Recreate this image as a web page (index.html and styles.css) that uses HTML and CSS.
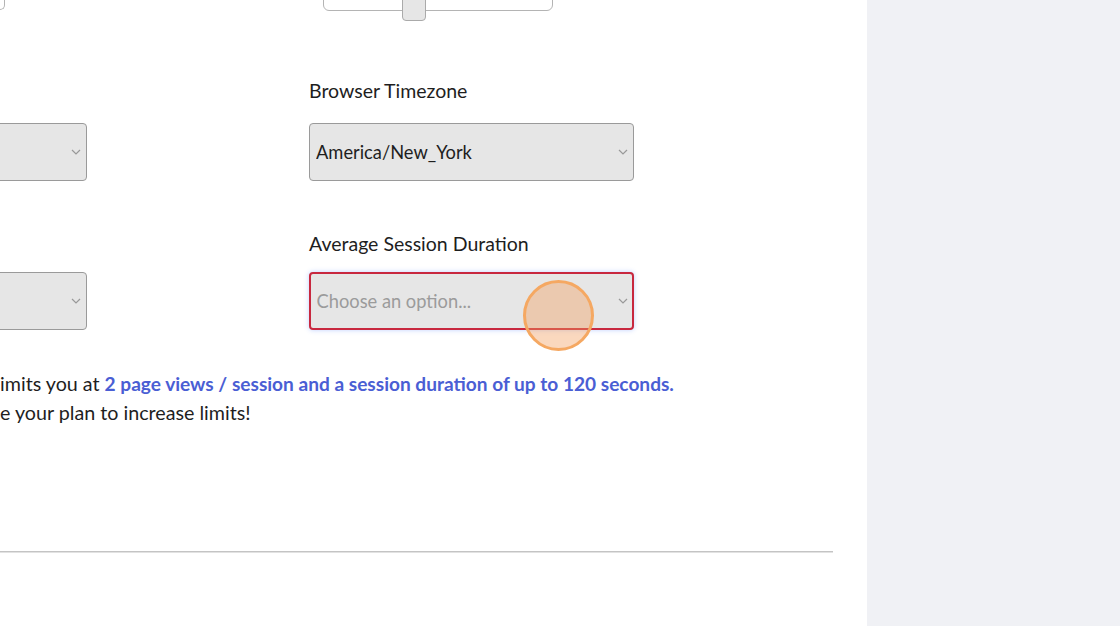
FILE: index.html
```html
<!DOCTYPE html>
<html lang="en">
<head>
    <meta charset="UTF-8">
    <title>Site Settings</title>
    <link rel="stylesheet" href="styles.css">
</head>
<body>

<div class="main">
    <div class="form">
        <div class="top-row">
            <div class="col">
                <div class="box"></div>
            </div>
            <div class="col">
                <div class="slider">
                    <div class="thumb"></div>
                </div>
            </div>
        </div>

        <div class="field-row">
            <div class="col">
                <label class="field-label">&nbsp;</label>
                <div class="select-wrap">
                    <select class="select" aria-label="Browser Language"><option></option></select>
                    <svg class="chevron" width="10" height="6" viewBox="0 0 10 6"><polyline points="1,1 5,5 9,1" fill="none" stroke="#999" stroke-width="1.2"/></svg>
                </div>
            </div>
            <div class="col">
                <label class="field-label">Browser Timezone</label>
                <div class="select-wrap">
                    <select class="select"><option>America/New_York</option></select>
                    <svg class="chevron" width="10" height="6" viewBox="0 0 10 6"><polyline points="1,1 5,5 9,1" fill="none" stroke="#999" stroke-width="1.2"/></svg>
                </div>
            </div>
        </div>

        <div class="field-row second">
            <div class="col">
                <label class="field-label">&nbsp;</label>
                <div class="select-wrap">
                    <select class="select" aria-label="Page Views per Session"><option></option></select>
                    <svg class="chevron" width="10" height="6" viewBox="0 0 10 6"><polyline points="1,1 5,5 9,1" fill="none" stroke="#999" stroke-width="1.2"/></svg>
                </div>
            </div>
            <div class="col">
                <label class="field-label">Average Session Duration</label>
                <div class="select-wrap">
                    <select class="select select-focus"><option>Choose an option...</option></select>
                    <svg class="chevron" width="10" height="6" viewBox="0 0 10 6"><polyline points="1,1 5,5 9,1" fill="none" stroke="#999" stroke-width="1.2"/></svg>
                    <div class="click-dot"></div>
                </div>
            </div>
        </div>
    </div>

    <div class="note">
        <p>imits you at <strong>2 page views / session and a session duration of up to 120 seconds.</strong></p>
        <p>e your plan to increase limits!</p>
    </div>

    <hr class="divider">
</div>

<div class="side"></div>

</body>
</html>
```

FILE: styles.css
```css
body {
    margin: 0;
    display: flex;
    height: 626px;
    overflow: hidden;
    font-family: Lato, "Noto Sans", sans-serif;
    color: #1e1e1e;
}
.main {
    width: 867px;
    background: white;
    overflow: hidden;
}
.side {
    flex: 1;
    background: #f0f1f5;
}
.form {
    margin-left: -238px;
    width: 1094px;
}
.top-row {
    display: grid;
    grid-template-columns: 547px 547px;
    margin-top: -30px;
    height: 41px;
}
.box {
    width: 243px;
    height: 40px;
    border: 1px solid #b4b4b4;
    border-top: none;
    border-radius: 0 0 5px 5px;
    box-sizing: border-box;
}
.slider {
    position: relative;
    margin-left: 14px;
    width: 230px;
    height: 41px;
    border: 1.5px solid #b4b4b4;
    border-radius: 0 0 6px 6px;
    box-sizing: border-box;
}
.thumb {
    position: absolute;
    left: 78px;
    bottom: -11px;
    width: 24px;
    height: 32px;
    background: #e6e6e6;
    border: 1.5px solid #aaa;
    border-radius: 4px;
    box-sizing: border-box;
}
.field-row {
    display: grid;
    grid-template-columns: 547px 547px;
    margin-top: 68px;
}
.field-row.second {
    margin-top: 51px;
}
.field-label {
    display: block;
    font-size: 19.5px;
    line-height: 24px;
    margin-bottom: 20px;
    color: #1e1e1e;
}
.second .field-label {
    margin-bottom: 16px;
}
.select-wrap {
    position: relative;
    width: 325px;
}
.select {
    appearance: none;
    display: block;
    width: 100%;
    height: 58px;
    padding: 0 30px 0 6px;
    background: #e6e6e6;
    border: 1.5px solid #9a9a9a;
    border-radius: 4px;
    font-family: Lato, "Noto Sans", sans-serif;
    font-size: 18.3px;
    color: #1e1e1e;
    box-sizing: border-box;
}
.select-focus {
    border: 2px solid #c8283f;
    padding-left: 5.5px;
    color: #9b9b9b;
    box-shadow: 0 0 5px rgba(110, 150, 255, 0.45);
}
.chevron {
    position: absolute;
    right: 6px;
    top: 26px;
}
.click-dot {
    position: absolute;
    left: 214px;
    top: 8px;
    width: 71px;
    height: 71px;
    border-radius: 50%;
    border: 3px solid #f5a862;
    background: rgba(242, 158, 92, 0.4);
    box-sizing: border-box;
}
.note {
    margin-top: 39px;
    font-size: 19.7px;
    line-height: 29px;
}
.note p {
    margin: 0;
}
.note strong {
    font-size: 19.1px;
    color: #4a5ed4;
}
.divider {
    width: 833px;
    margin: 124px 0 0 0;
    border: none;
    border-top: 1px solid #c4c4c4;
    border-bottom: 1px solid #e2e2e2;
}
```
